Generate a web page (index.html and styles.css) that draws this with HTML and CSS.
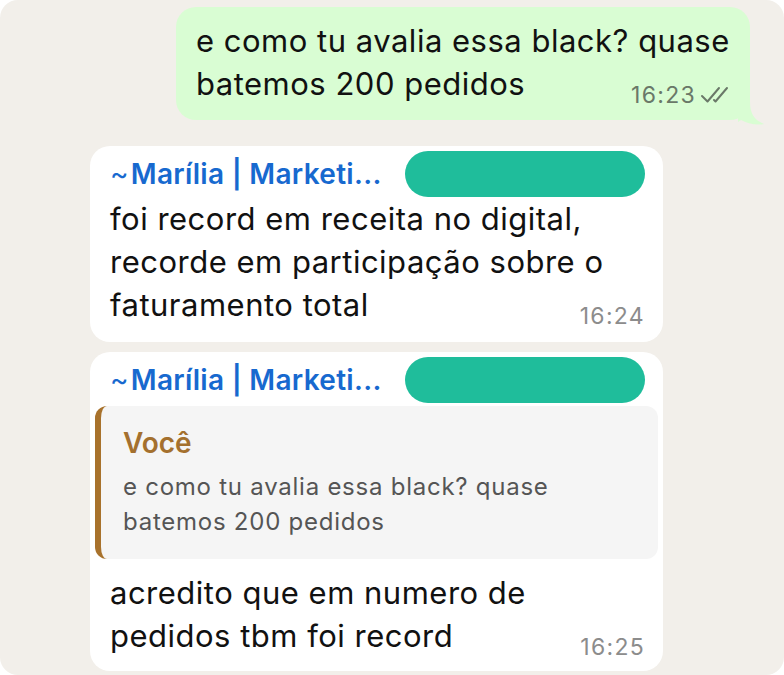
FILE: index.html
```html
<!DOCTYPE html>
<html lang="pt-BR">
<head>
  <meta charset="UTF-8" />
  <meta name="viewport" content="width=device-width, initial-scale=1" />
  <title>Conversa</title>
  <link rel="stylesheet" href="styles.css">
</head>
<body>
  <div class="chat">
    <div class="bubble sent">
      <p class="text">e como tu avalia essa black? quase<br>batemos 200 pedidos<span class="meta">16:23<svg class="ticks" viewBox="0 0 32 18" width="32" height="18"><path d="M2 10 L7.5 15.5 L19 2 M14 14 L15.5 15.5 L27 2" fill="none" stroke="currentColor" stroke-width="2" stroke-linecap="round" stroke-linejoin="round"/></svg></span></p>
      <svg class="tail" viewBox="0 0 28 28" width="28" height="28"><path d="M12 0 L12 4 C12 15 16 22 26 26 C18 27.5 9 25.5 3 22 L0 24 L0 0 Z" fill="#d9fdd3"/></svg>
    </div>

    <div class="bubble received first">
      <div class="sender">
        <span class="name"><span class="tilde">~</span>Marília | Marketi...</span>
        <span class="phone"></span>
      </div>
      <p class="text">foi record em receita no digital,<br>recorde em participação sobre o<br>faturamento total<span class="meta">16:24</span></p>
    </div>

    <div class="bubble received">
      <div class="sender">
        <span class="name"><span class="tilde">~</span>Marília | Marketi...</span>
        <span class="phone"></span>
      </div>
      <div class="quote">
        <div class="quote-author">Você</div>
        <div class="quote-text">e como tu avalia essa black? quase<br>batemos 200 pedidos</div>
      </div>
      <p class="text">acredito que em numero de<br>pedidos tbm foi record<span class="meta">16:25</span></p>
    </div>
  </div>
</body>
</html>
```

FILE: styles.css
```css
* {
  margin: 0;
  padding: 0;
  box-sizing: border-box;
  font-family: Inter, 'Liberation Sans', sans-serif;
}
body {
  background-color: #ffffff;
}
.chat {
  width: 784px;
  height: 675px;
  background-color: #f2efea;
  border-radius: 18px;
  padding-top: 7px;
  overflow: hidden;
}
.bubble {
  position: relative;
  display: flow-root;
  border-radius: 20px;
  color: #111;
}
.sent {
  background-color: #d9fdd3;
  margin-left: 176px;
  width: 574px;
  padding: 12px 18px 15px 20px;
}
.received {
  background-color: #ffffff;
  margin-left: 90px;
  width: 573px;
  padding: 5px 18px 14px 20px;
  margin-top: 10px;
}
.received.first {
  margin-top: 26px;
  padding-bottom: 16px;
}
.text {
  font-size: 31px;
  line-height: 43px;
  letter-spacing: 0.5px;
}
.meta {
  float: right;
  padding-top: 24px;
  line-height: 19px;
  font-size: 23px;
  color: #8c8c8c;
  letter-spacing: 1.3px;
}
.sent .meta {
  color: #6a7868;
}
.ticks {
  margin-left: 4px;
  vertical-align: -1px;
}
.tail {
  position: absolute;
  left: 562px;
  bottom: -6px;
}
.sender {
  display: flex;
  align-items: center;
  height: 46px;
}
.name {
  color: #1769cf;
  font-size: 28px;
  font-weight: 600;
  letter-spacing: 0.3px;
}
.tilde {
  font-weight: 400;
  margin-right: 2px;
}
.phone {
  margin-left: auto;
  width: 240px;
  height: 46px;
  border-radius: 23px;
  background-color: #1fbd9b;
}
.quote {
  margin: 3px -13px 12px -15px;
  background-color: #f5f5f5;
  border-left: 6px solid #a8722c;
  border-radius: 12px;
  padding: 18px 16px 20px 22px;
}
.quote-author {
  color: #a4702e;
  font-size: 28px;
  font-weight: 600;
  line-height: 38px;
  margin-bottom: 7px;
}
.quote-text {
  color: #555;
  font-size: 24px;
  line-height: 35px;
  letter-spacing: 0.75px;
}
```
